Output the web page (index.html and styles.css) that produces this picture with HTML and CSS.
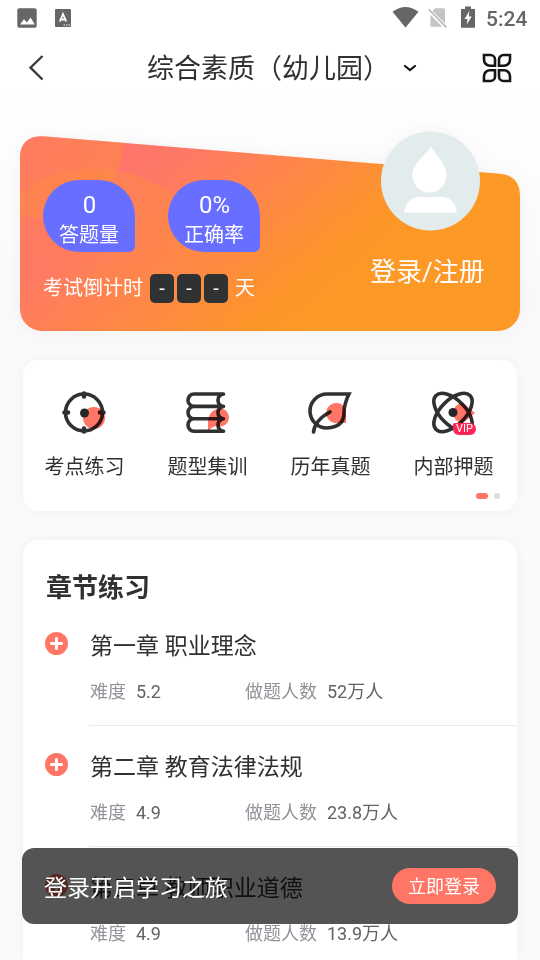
FILE: index.html
```html
<!DOCTYPE html>
<html lang="zh-CN">
<head>
<meta charset="utf-8">
<meta name="viewport" content="width=device-width, initial-scale=1">
<title>综合素质（幼儿园）</title>
<link rel="stylesheet" href="styles.css">
</head>
<body>
<div class="status">
  <svg class="status-left" width="72" height="36" viewBox="0 0 72 36">
    <rect x="17.3" y="8.3" width="19.4" height="19.4" rx="2" fill="#666"/>
    <path d="M20 24.5l4-5.2 2.8 3.3 3.8-5 4.2 6.900z" fill="#fff"/>
    <rect x="55" y="9" width="16" height="18" rx="1" fill="#666"/>
    <path d="M59.800 21.500l3.200-7.500 3.200 7.500M61 19.500h4" fill="none" stroke="#fff" stroke-width="1.800"/>
    <path d="M63.500 25h1.500M66 25h1.500M68.500 25h1.500" stroke="#fff" stroke-width="1.200"/>
  </svg>
  <svg class="status-right" width="88" height="36" viewBox="392 0 88 36">
    <path d="M392.500 11.700Q405.500 2.300 418.500 11.700L405.500 27.500z" fill="#666"/>
    <path d="M435 8.200h8.500q1.500 0 1.500 1.500v17h-14.500v-14z" fill="#c4c4c4"/>
    <path d="M427.500 9l19 19" stroke="#fff" stroke-width="4"/>
    <path d="M428.500 9.200l18 18.300" stroke="#c0c0c0" stroke-width="1.800"/>
    <path d="M461 9h4V6.500h6V9h4v18.700h-14z" fill="#666"/>
    <path d="M469.500 11l-5 8h3l-.8 5.500 5-8h-3z" fill="#fff"/>
  </svg>
  <span class="clock">5:24</span>
</div>
<header class="nav">
  <svg class="back" width="16" height="26" viewBox="0 0 16 26"><path d="M14.500 1L2.500 12.700l12 11.800" fill="none" stroke="#3a3b3d" stroke-width="2.400"/></svg>
  <h1>综合素质（幼儿园）</h1>
  <svg class="caret" width="14" height="10" viewBox="0 0 14 10"><path d="M2 3l5 4 5-4" fill="none" stroke="#111" stroke-width="2.200" stroke-linecap="round"/></svg>
  <svg class="menu" width="30" height="30" viewBox="0 0 30 30" fill="none" stroke="#161616" stroke-width="2.600">
    <path d="M2 2h6.500a4.500 4.500 0 0 1 4.500 4.500v6.300H8a6 6 0 0 1-6-6z"/>
    <path d="M28 2h-6.500a4.500 4.500 0 0 0-4.500 4.500v6.300h5a6 6 0 0 0 6-6z"/>
    <path d="M2 28h6.500a4.500 4.500 0 0 0 4.500-4.500v-6.300H8a6 6 0 0 0-6 6z"/>
    <path d="M28 28h-6.500a4.500 4.500 0 0 1-4.500-4.500v-6.300h5a6 6 0 0 1 6 6z"/>
  </svg>
</header>
<main>
  <section class="hero">
    <svg class="hero-bg" width="500" height="195" viewBox="20 136 500 195">
      <defs>
        <linearGradient id="base" gradientUnits="userSpaceOnUse" x1="160" y1="120" x2="330" y2="320"><stop offset="0" stop-color="#ff756b"/><stop offset=".15" stop-color="#ff7866"/><stop offset=".82" stop-color="#fd9629"/><stop offset="1" stop-color="#fd9926"/></linearGradient>
        <linearGradient id="orbit" gradientUnits="userSpaceOnUse" x1="150" y1="170" x2="110" y2="300"><stop offset="0" stop-color="#fd8e3c" stop-opacity=".45"/><stop offset="1" stop-color="#fd8e3c" stop-opacity=".1"/></linearGradient>
        <linearGradient id="corner" gradientUnits="userSpaceOnUse" x1="20" y1="140" x2="115" y2="200"><stop offset="0" stop-color="#fd8e3c" stop-opacity=".25"/><stop offset="1" stop-color="#fd8e3c" stop-opacity=".55"/></linearGradient>
        <clipPath id="shape"><path d="M43 136.200L500 173.700Q520 175.500 520 196V309A22 22 0 0 1 498 331H42A22 22 0 0 1 20 309V158Q20 136 43 136.200z"/></clipPath>
      </defs>
      <g clip-path="url(#shape)">
        <rect x="20" y="136" width="500" height="195" fill="url(#base)"/>
        <circle cx="40" cy="133" r="85" fill="url(#corner)"/>
        <circle cx="95" cy="299" r="130" fill="url(#orbit)"/>
      </g>
    </svg>
    <div class="hero-main">
      <div class="stats">
        <div class="stat"><b>0</b><span>答题量</span></div>
        <div class="stat"><b>0%</b><span>正确率</span></div>
      </div>
      <div class="countdown"><span>考试倒计时</span><i>-</i><i>-</i><i>-</i><span class="day">天</span></div>
    </div>
    <div class="account">
      <svg width="100" height="100" viewBox="0 0 100 100"><circle cx="49.500" cy="50" r="49.500" fill="#e3eced"/><path d="M50 15.500C46.500 22.500 31.500 32 31.500 44.500a17 17 0 0 0 34 0C65.500 32 53.500 22.500 50 15.500z" fill="#fff"/><path d="M23 81.500Q25.500 66 39 66H60Q73.500 66 76 81.500z" fill="#fff"/></svg>
      <div>登录/注册</div>
    </div>
  </section>
  <section class="card shortcuts">
    <div class="grid">
      <a><svg width="50" height="50" viewBox="0 0 50 50"><circle cx="35" cy="30" r="11" fill="#ff7566"/><g class="ink"><circle cx="25" cy="24.500" r="18.500"/><path d="M25 5.500v3M25 40.500v3M5.500 24.500h3.500M41 24.500h3.500" stroke-width="4.600"/></g><circle cx="25.500" cy="25" r="4.500" fill="#242629"/></svg><span>考点练习</span></a>
      <a><svg width="50" height="50" viewBox="0 0 50 50"><path d="M26 43.500V34.500Q26 22 38 20.500A9 9 0 1 1 35 38Q30 38 26 43.500z" fill="#ff7566"/><g class="ink"><path d="M41.500 6H12a6 6.200 0 0 0 0 12.400H41.500M12 18.400a6 6.200 0 0 0 0 12.400H41.500M12 30.800a6 6.200 0 0 0 0 12.400H41.500M41.500 6Q36 7 36 12.200T41.500 18.400Q36 19.400 36 24.600T41.500 30.800Q36 31.800 36 37T41.500 43.200"/></g></svg><span>题型集训</span></a>
      <a><svg width="50" height="50" viewBox="0 0 50 50"><path d="M41 35V27a10 10 0 1 0-10 8z" fill="#ff7566"/><g class="ink"><path d="M44 6H22A17 17 0 0 0 5 23.500A17 17 0 0 0 22 40Q39 39 39 25Q39 16 44 6z"/><path d="M25 24Q10 32 8.500 44"/></g></svg><span>历年真题</span></a>
      <a class="vip-item"><svg width="50" height="50" viewBox="0 0 50 50"><path d="M35 15l12 10-12 10a10 10 0 1 1 0-20z" fill="#ff7566"/><g class="ink"><ellipse cx="25" cy="24.500" rx="24" ry="12.500" transform="rotate(45 25 24.500)"/><ellipse cx="25" cy="24.500" rx="24" ry="12.500" transform="rotate(-45 25 24.500)"/></g><circle cx="25" cy="24.500" r="4.500" fill="#242629"/></svg><em>VIP</em><span>内部押题</span></a>
    </div>
    <div class="pager"><i class="on"></i><i></i></div>
  </section>
  <section class="card chapters">
    <h2>章节练习</h2>
    <article>
      <svg class="plus" width="24" height="24" viewBox="0 0 24 24"><circle cx="11.500" cy="11.500" r="11.500" fill="#ff7566"/><path d="M11.500 6.500v10M6.500 11.500h10" stroke="#fff" stroke-width="3" stroke-linecap="round"/></svg>
      <div class="body"><h3>第一章 职业理念</h3><p><span>难度</span><b>5.2</b><span class="people">做题人数</span><b>52万人</b></p></div>
    </article>
    <article>
      <svg class="plus" width="24" height="24" viewBox="0 0 24 24"><circle cx="11.500" cy="11.500" r="11.500" fill="#ff7566"/><path d="M11.500 6.500v10M6.500 11.500h10" stroke="#fff" stroke-width="3" stroke-linecap="round"/></svg>
      <div class="body"><h3>第二章 教育法律法规</h3><p><span>难度</span><b>4.9</b><span class="people">做题人数</span><b>23.8万人</b></p></div>
    </article>
    <article>
      <svg class="plus" width="24" height="24" viewBox="0 0 24 24"><circle cx="11.500" cy="11.500" r="11.500" fill="#ff7566"/><path d="M11.500 6.500v10M6.500 11.500h10" stroke="#fff" stroke-width="3" stroke-linecap="round"/></svg>
      <div class="body"><h3>第三章 教师职业道德</h3><p><span>难度</span><b>4.9</b><span class="people">做题人数</span><b>13.9万人</b></p></div>
    </article>
  </section>
</main>
<aside class="login-bar"><span>登录开启学习之旅</span><button>立即登录</button></aside>
</body>
</html>
```
FILE: styles.css
```css
* { box-sizing: border-box; margin: 0; padding: 0; }
html, body { height: 960px; overflow: hidden; }
body {
  width: 540px;
  font-family: Roboto, "Noto Sans CJK SC", sans-serif;
  color: #303133;
  background: linear-gradient(#fff 90px, #fafafa 300px);
}
svg { display: block; flex: none; }
i, em { font-style: normal; }

.status { display: flex; height: 36px; }
.status-right { margin-left: 320px; }
.clock { margin-left: 6px; padding-top: 1px; font-size: 21px; line-height: 36px; font-weight: 500; color: #666; }

.nav { display: flex; align-items: center; height: 64px; padding-left: 28px; }
.nav h1 { margin-left: 103px; width: 243px; padding-top: 2px; font-size: 27px; line-height: 40px; font-weight: 400; white-space: nowrap; }
.caret { margin-left: 13px; }
.menu { margin-left: 64.500px; }

.hero { position: relative; display: flex; width: 500px; height: 195px; margin: 36px 0 0 20px; filter: drop-shadow(0 0 10px rgba(0, 0, 0, .04)); }
.hero-bg { position: absolute; inset: 0; }
.hero-main { position: relative; width: 340px; padding: 44px 0 0 23px; color: #fff; }
.stats { display: flex; gap: 33px; }
.stat { width: 92px; height: 72px; padding-top: 11px; text-align: center; background: #686eff; border-radius: 36px 36px 6px 36px; }
.stat b { display: block; padding-left: 1px; font-weight: 400; font-size: 24px; line-height: 28px; }
.stat span { display: block; padding-top: 1px; font-size: 20px; line-height: 30px; }
.countdown { display: flex; align-items: center; height: 29px; margin-top: 22px; font-size: 20px; line-height: 29px; white-space: nowrap; }
.countdown i { width: 24px; height: 29px; margin-left: 3px; border-radius: 5px; background: #303133; font-size: 20px; line-height: 29px; text-align: center; }
.countdown span + i { margin-left: 7px; }
.day { margin-left: 7px; }
.account { position: relative; width: 120px; margin: -5px 0 0 10px; color: #fff; font-size: 26px; line-height: 40px; }
.account svg { margin-left: 11px; }
.account div { margin-top: 21px; white-space: nowrap; }

.card { width: 494px; margin-left: 23px; background: #fff; border-radius: 15px; box-shadow: 0 0 14px rgba(0, 0, 0, .04); }
.shortcuts { height: 151px; margin-top: 29px; padding-top: 28px; }
.grid { display: grid; grid-template-columns: repeat(4, 123px); }
.grid a { position: relative; display: flex; flex-direction: column; align-items: center; font-size: 20px; line-height: 30px; }
.grid a svg { margin-left: -1px; }
.grid a span { margin-top: 14px; }
.ink { fill: none; stroke: #303133; stroke-width: 3.6; stroke-linecap: round; stroke-linejoin: miter; mix-blend-mode: multiply; }
.vip-item em { position: absolute; left: 61px; top: 35px; width: 23px; height: 12px; border-radius: 2px 6px 6px 6px; background: #ff2356; color: #fff; font-size: 11px; line-height: 12px; text-align: center; }
.pager { display: flex; justify-content: flex-end; gap: 6px; padding-right: 17px; margin-top: 11px; }
.pager i { width: 6px; height: 6px; border-radius: 3px; background: #ddd; }
.pager .on { width: 12px; background: #ff7566; }

.chapters { height: 420px; margin-top: 29px; padding-top: 28px; border-radius: 15px 15px 0 0; }
.chapters h2 { padding-left: 23px; font-size: 26px; line-height: 40px; font-weight: 700; }
article { display: flex; height: 121px; padding-left: 22px; }
.plus { margin: 24px 20px 0 0; }
.body { flex: 1; height: 118px; border-bottom: 1px solid #ebebeb; }
article h3 { padding: 21px 0 0 1px; font-size: 23px; line-height: 36px; font-weight: 400; }
article p { display: flex; padding: 13px 0 0 1px; font-size: 18px; line-height: 28px; color: #909399; white-space: nowrap; }
article b { margin-left: 10px; font-weight: 400; color: #606266; }
article .people { margin-left: 84px; }

.login-bar { position: absolute; left: 22px; top: 848px; display: flex; align-items: center; justify-content: space-between; width: 496px; height: 76px; padding: 0 22px; border-radius: 12px; background: rgba(0, 0, 0, .67); color: #fff; font-size: 23px; }
.login-bar button { width: 104px; height: 36px; padding-top: 1px; border: 0; border-radius: 18px; background: #ff7566; color: #fff; font: 18px/35px Roboto, "Noto Sans CJK SC", sans-serif; }
```
